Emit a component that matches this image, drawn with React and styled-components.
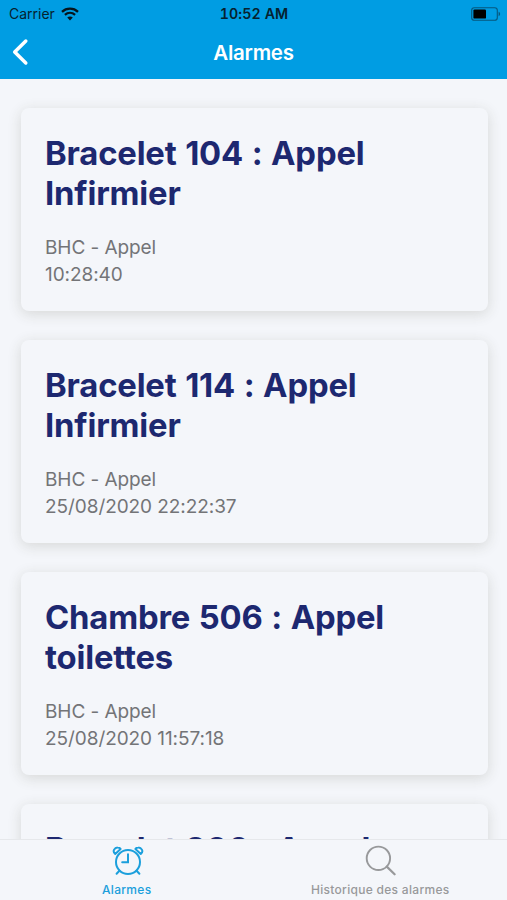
import React from "react";
import styled, { createGlobalStyle } from "styled-components";

const GlobalStyle = createGlobalStyle`
  * {
    box-sizing: border-box;
  }
  body {
    margin: 0;
    background: #f4f6fa;
    font-family: Inter, "Liberation Sans", sans-serif;
  }
`;

const Screen = styled.div`
  display: flex;
  flex-direction: column;
  height: 900px;
  width: 507px;
  overflow: hidden;
  background: #f4f6fa;
`;

const Header = styled.header`
  flex: none;
  height: 79px;
  background: #009de3;
`;

const StatusBar = styled.div`
  display: grid;
  grid-template-columns: 1fr auto 1fr;
  align-items: center;
  height: 27px;
  padding: 0 6px 0 9px;
  color: #06222f;

  svg {
    display: block;
  }
`;

const Carrier = styled.div`
  display: flex;
  align-items: center;
  gap: 6px;
  font-size: 14px;
`;

const Clock = styled.div`
  margin-right: 2px;
  font-size: 14.2px;
  font-weight: 600;
  font-feature-settings: "tnum" 1;
  letter-spacing: 0.1px;
`;

const Battery = styled.div`
  justify-self: end;
`;

const NavBar = styled.div`
  display: grid;
  grid-template-columns: 60px 1fr 60px;
  align-items: center;
  height: 50px;
`;

const BackButton = styled.button`
  display: block;
  padding: 0 0 0 11px;
  border: 0;
  background: none;

  svg {
    display: block;
  }
`;

const NavTitle = styled.h1`
  margin: 0;
  padding-top: 1px;
  color: #fff;
  font-size: 20.5px;
  font-weight: 600;
  line-height: 26px;
  letter-spacing: -0.25px;
  text-align: center;
`;

const AlarmList = styled.main`
  display: flex;
  flex: 1;
  flex-direction: column;
  gap: 29px;
  min-height: 0;
  padding: 29px 19px 0 21px;
  overflow: hidden;
`;

const Card = styled.article`
  flex: none;
  height: 203px;
  padding: 25px 24px;
  border-radius: 8px;
  background: #f4f6fa;
  box-shadow: 0 3px 14px rgba(60, 60, 40, 0.16);
`;

const CardTitle = styled.h2`
  margin: 0 0 21px;
  color: #1d2870;
  font-size: 32.8px;
  font-weight: 700;
  font-feature-settings: "calt" 0;
  line-height: 40px;
  letter-spacing: -0.17px;
  word-spacing: 1px;
`;

const CardText = styled.p`
  margin: 0;
  color: #737477;
  font-size: 19px;
  line-height: 27px;
  letter-spacing: -0.07px;
`;

const TabBar = styled.nav`
  display: grid;
  flex: none;
  grid-template-columns: 1fr 1fr;
  height: 61px;
  border-top: 1px solid #e6e8eb;
  background: #f4f6fa;
`;

const Tab = styled.div`
  display: flex;
  flex-direction: column;
  align-items: center;
  padding-top: 5px;
  color: ${(props) => (props.$active ? "#1b9fdc" : "#98999b")};

  svg {
    display: block;
  }
`;

const TabLabel = styled.span`
  margin-top: 5px;
  font-size: 12px;
  font-weight: 500;
  line-height: 16px;
  letter-spacing: 0.3px;
`;

const WifiIcon = () => (
  <svg width="18" height="14" viewBox="0 0 18 14" fill="none" stroke="#06151d">
    <path d="M1 4.8C5.5.6 12.5.6 17 4.8" strokeWidth="2.3" />
    <path d="M3.9 7.9c3-2.7 7.2-2.7 10.2 0" strokeWidth="2.2" />
    <path d="M9 13.5 6.2 10.6c1.6-1.4 4-1.4 5.6 0z" fill="#06151d" stroke="none" />
  </svg>
);

const BatteryIcon = () => (
  <svg width="30" height="14" viewBox="0 0 30 14">
    <rect x="0.7" y="0.7" width="25.6" height="12.6" rx="2.6" fill="none" stroke="#06577d" strokeWidth="1.1" />
    <rect x="2.4" y="2.4" width="12.6" height="9.2" rx="1.2" fill="#000" />
    <path d="M27.6 4.8c2 .7 2 3.7 0 4.4z" fill="#06577d" />
  </svg>
);

const BackIcon = () => (
  <svg width="18" height="28" viewBox="0 0 18 28" fill="none" stroke="#fff">
    <path d="M14.8 3 3.7 14l11.1 11" strokeWidth="3.5" strokeLinecap="round" strokeLinejoin="round" />
  </svg>
);

const AlarmIcon = () => (
  <svg width="34" height="32" viewBox="0 0 34 32" fill="none" stroke="currentColor" strokeWidth="2" strokeLinecap="round">
    <circle cx="18" cy="17" r="12" />
    <path d="M18 9.3v8h-5.8M9.4 25.7l-2.8 3M26.6 25.7l2.8 3" />
    <path
      d="M5.2 8.9C1.8 6.2 4.9 2.3 7.6 2.4c1.5 0 2.6.7 3 1.6zM30.8 8.9c3.4-2.7.3-6.6-2.4-6.5-1.5 0-2.6.7-3 1.6z"
      strokeLinejoin="round"
    />
  </svg>
);

const SearchIcon = () => (
  <svg width="32" height="32" viewBox="0 0 32 32" fill="none" stroke="currentColor" strokeWidth="1.9" strokeLinecap="round">
    <circle cx="14.4" cy="13.3" r="11.7" />
    <path d="m22.8 21.6 7.8 7.7" strokeWidth="2.2" />
  </svg>
);

const alarms = [
  { title: "Bracelet 104 : Appel Infirmier", type: "BHC - Appel", date: "10:28:40" },
  { title: "Bracelet 114 : Appel Infirmier", type: "BHC - Appel", date: "25/08/2020 22:22:37" },
  { title: "Chambre 506 : Appel toilettes", type: "BHC - Appel", date: "25/08/2020 11:57:18" },
  { title: "Bracelet 206 : Appel", type: "", date: "" },
];

const App = () => {
  return (
    <>
      <GlobalStyle />
      <Screen>
        <Header>
          <StatusBar>
            <Carrier>
              Carrier
              <WifiIcon />
            </Carrier>
            <Clock>10:52 AM</Clock>
            <Battery>
              <BatteryIcon />
            </Battery>
          </StatusBar>
          <NavBar>
            <BackButton aria-label="Retour">
              <BackIcon />
            </BackButton>
            <NavTitle>Alarmes</NavTitle>
          </NavBar>
        </Header>
        <AlarmList>
          {alarms.map((el) => (
            <Card key={el.title}>
              <CardTitle>{el.title}</CardTitle>
              <CardText>{el.type}</CardText>
              <CardText>{el.date}</CardText>
            </Card>
          ))}
        </AlarmList>
        <TabBar>
          <Tab $active>
            <AlarmIcon />
            <TabLabel>Alarmes</TabLabel>
          </Tab>
          <Tab>
            <SearchIcon />
            <TabLabel>Historique des alarmes</TabLabel>
          </Tab>
        </TabBar>
      </Screen>
    </>
  );
};

export default App;
